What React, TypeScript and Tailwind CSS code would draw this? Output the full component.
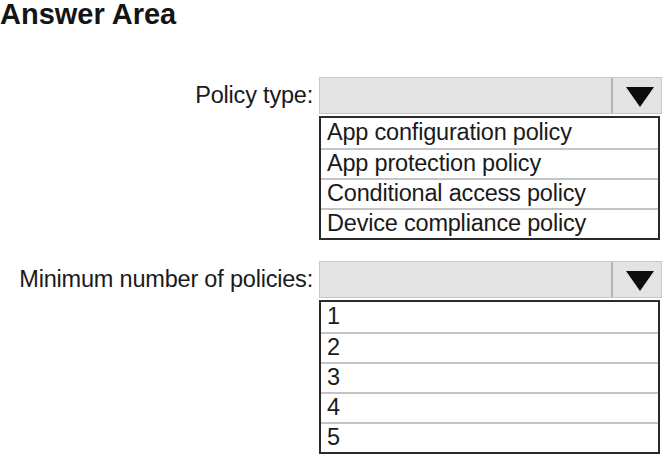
type Dropdown = {
  label: string
  options: string[]
}

const dropdowns: Dropdown[] = [
  {
    label: 'Policy type:',
    options: [
      'App configuration policy',
      'App protection policy',
      'Conditional access policy',
      'Device compliance policy',
    ],
  },
  {
    label: 'Minimum number of policies:',
    options: ['1', '2', '3', '4', '5'],
  },
]

export default function App() {
  return (
    <div className="h-[458px] w-[662px] overflow-hidden bg-white font-['Liberation_Sans',Arial,sans-serif] text-[#1a1a1a]">
      <h1 className="text-[29px] font-bold leading-[28px] text-[#141414]">Answer Area</h1>

      <div className="mt-[49px] flex flex-col gap-[21px]">
        {dropdowns.map((dropdown) => (
          <DropdownRow key={dropdown.label} dropdown={dropdown} />
        ))}
      </div>
    </div>
  )
}

function DropdownRow({ dropdown }: { dropdown: Dropdown }) {
  return (
    <div className="flex items-start">
      <div className="flex h-[37px] w-[313px] items-center justify-end text-[23.5px] leading-none tracking-[-0.2px]">
        {dropdown.label}
      </div>

      <div className="ml-[6px] flex w-[343px] flex-col">
        <div className="flex h-[37px] border border-[#c9c9c9] bg-[#e3e3e3]">
          <div className="flex-1" />
          <div className="flex w-[50px] items-center justify-center border-l-2 border-[#b4b4b4]">
            <Arrow />
          </div>
        </div>

        <ul className="mt-[2px] w-[341px] border-2 border-[#2a2a2a] bg-white">
          {dropdown.options.map((option, index) => (
            <li
              key={option}
              className={
                index === 0
                  ? 'flex h-[30px] items-center px-[6px] text-[23.5px] leading-none tracking-[-0.2px]'
                  : 'flex h-[30px] items-center border-t-2 border-[#c4c4c4] px-[6px] text-[23.5px] leading-none tracking-[-0.2px]'
              }
            >
              {option}
            </li>
          ))}
        </ul>
      </div>
    </div>
  )
}

// solid down triangle
function Arrow() {
  return (
    <svg width="30" height="22" viewBox="0 0 30 22" className="ml-[6px] mt-[2px]">
      <polygon points="1,1 29,1 15,21" fill="#0d0d0d" />
    </svg>
  )
}
